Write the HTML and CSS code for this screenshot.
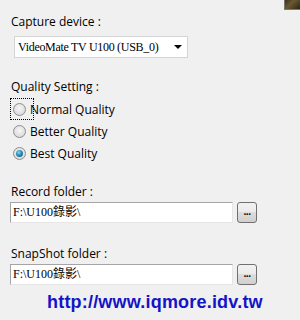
FILE: index.html
```html
<!DOCTYPE html>
<html>
<head>
<meta charset="utf-8">
<link rel="stylesheet" href="styles.css">
</head>
<body>
<div class="corner"></div>
<div class="panel">
  <div class="label lbl-capture">Capture device :</div>
  <div class="select">
    <span class="select-text">VideoMate TV U100 (USB_0)</span>
    <span class="arrow"></span>
  </div>

  <div class="label lbl-quality">Quality Setting :</div>
  <div class="radios">
    <div class="radio-row focus"><span class="radio"></span><span class="rtext">Normal Quality</span></div>
    <div class="radio-row"><span class="radio"></span><span class="rtext">Better Quality</span></div>
    <div class="radio-row"><span class="radio checked"></span><span class="rtext">Best Quality</span></div>
  </div>

  <div class="label lbl-record">Record folder :</div>
  <div class="field-row">
    <div class="input">F:\U100錄影\</div>
    <div class="btn">...</div>
  </div>

  <div class="label lbl-snap">SnapShot folder :</div>
  <div class="field-row">
    <div class="input">F:\U100錄影\</div>
    <div class="btn">...</div>
  </div>

  <div class="url">http://www.iqmore.idv.tw</div>
</div>
</body>
</html>
```
FILE: styles.css
```css
html, body {
  margin: 0;
  padding: 0;
}
body {
  width: 300px;
  height: 320px;
  background: #f0f0f0;
  overflow: hidden;
  position: relative;
  font-family: "Open Sans", "Noto Sans", sans-serif;
  font-size: 12px;
  color: #000;
}
.corner {
  position: absolute;
  top: 0;
  right: 0;
  width: 15px;
  height: 9px;
  background: linear-gradient(135deg, #3a3020 0%, #6a5a30 40%, #2a2418 100%);
  border-left: 1px solid #777;
  border-bottom: 1px solid #777;
}
.panel {
  display: flex;
  flex-direction: column;
  padding-left: 10px;
}
.label {
  height: 16px;
  line-height: 16px;
  padding-left: 1px;
  white-space: nowrap;
}
.lbl-capture { margin-top: 14px; }
.lbl-quality { margin-top: 21px; }
.lbl-record { margin-top: 20px; }
.lbl-snap { margin-top: 23px; }

.select {
  margin-top: 6px;
  margin-left: 4px;
  width: 172px;
  height: 20px;
  background: #fff;
  border: 1px solid #d4d4d4;
  display: flex;
  align-items: center;
  justify-content: space-between;
  box-sizing: content-box;
}
.select-text {
  font-family: "Liberation Serif", serif;
  font-size: 12px;
  padding-left: 3px;
  letter-spacing: -0.3px;
  white-space: nowrap;
}
.arrow {
  width: 0;
  height: 0;
  border-left: 4px solid transparent;
  border-right: 4px solid transparent;
  border-top: 4px solid #000;
  margin-right: 5px;
}

.radios {
  display: flex;
  flex-direction: column;
  margin-top: 3px;
}
.radio-row {
  height: 22px;
  display: flex;
  align-items: center;
  padding-left: 3px;
}
.radio-row.focus {
  outline: 1px dotted #000;
  outline-offset: -1px;
  width: 21px;
  overflow: visible;
}
.radio {
  width: 11px;
  height: 11px;
  border-radius: 50%;
  border: 1px solid #8e8f8f;
  background: radial-gradient(circle at 50% 40%, #f7f7f7 0%, #e2e2e2 55%, #cfcfcf 100%);
  flex: none;
  position: relative;
}
.radio.checked::after {
  content: "";
  position: absolute;
  left: 2px;
  top: 2px;
  width: 7px;
  height: 7px;
  border-radius: 50%;
  background: radial-gradient(circle at 40% 35%, #8fd8ee 0%, #2a8bb8 45%, #0f4e78 100%);
}
.rtext {
  margin-left: 4px;
  white-space: nowrap;
}

.field-row {
  display: flex;
  align-items: center;
  margin-top: 1px;
  height: 22px;
}
.input {
  width: 219px;
  height: 19px;
  background: #fff;
  border: 1px solid #a5a5a5;
  border-right-color: #e6e6e6;
  border-bottom-color: #e6e6e6;
  font-family: "Liberation Serif", "Noto Sans CJK TC", serif;
  font-size: 12px;
  line-height: 19px;
  padding-left: 2px;
  box-sizing: content-box;
  white-space: nowrap;
}
.btn {
  margin-left: 4px;
  width: 20px;
  height: 21px;
  border: 1px solid #707070;
  border-radius: 3px;
  background: linear-gradient(#f2f2f2 0%, #ebebeb 45%, #dddddd 50%, #cfcfcf 100%);
  box-sizing: border-box;
  font-size: 10px;
  line-height: 16px;
  text-align: center;
  letter-spacing: -0.5px;
  font-weight: bold;
}

.url {
  margin-top: 7px;
  margin-left: 37px;
  font-family: "Liberation Sans", Arial, sans-serif;
  font-weight: bold;
  font-size: 18px;
  line-height: 20px;
  letter-spacing: 0.2px;
  color: #1414c8;
  white-space: nowrap;
}
```
